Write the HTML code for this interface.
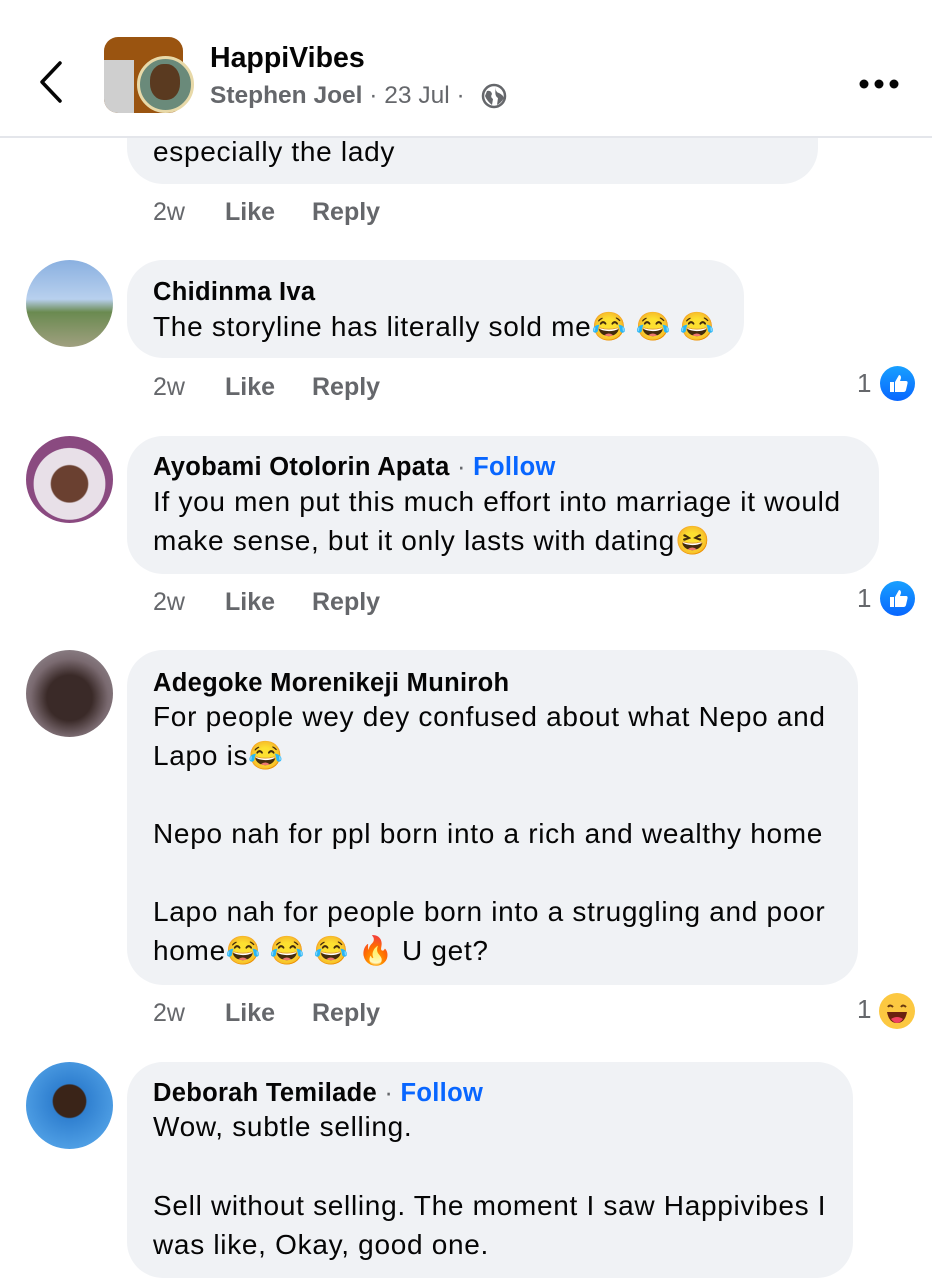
<!DOCTYPE html>
<html><head><meta charset="utf-8"><style>
*{margin:0;padding:0;box-sizing:border-box}
body{width:932px;height:1280px;overflow:hidden;background:#fff;font-family:"Liberation Sans",Arial,sans-serif;position:relative;color:#050505}
.a{position:absolute;white-space:nowrap}
.bub{position:absolute;background:#f0f2f5;border-radius:36px}
.av{position:absolute;left:26px;width:87px;height:87px;border-radius:50%;overflow:hidden}
.nm{font-weight:bold;font-size:25.5px;line-height:30px;letter-spacing:0.3px}
.tx{font-size:28px;line-height:39px;letter-spacing:0.7px}
.act{font-size:25px;color:#65676b;line-height:30px}
.act b{position:absolute}
.fol{color:#0866ff}
.cnt{font-size:26px;color:#65676b;line-height:30px}
.like{position:absolute;width:35px;height:35px;border-radius:50%;background:linear-gradient(#18a0ff,#0866ff)}
</style></head><body>

<div class="bub" style="left:127px;top:100px;width:691px;height:84px"></div>
<div class="a tx" style="left:153px;top:132px">especially the lady</div>

<div style="position:absolute;left:0;top:0;width:932px;height:138px;background:#fff;border-bottom:2px solid #e4e6eb"></div>
<svg class="a" style="left:36px;top:60px" width="30" height="44"><path d="M24 3 L6 22 L24 41" stroke="#050505" stroke-width="3.5" fill="none" stroke-linecap="round" stroke-linejoin="round"/></svg>
<div class="a" style="left:104px;top:37px;width:79px;height:76px;border-radius:14px;background:#9a5410"></div>
<div class="a" style="left:104px;top:60px;width:30px;height:53px;border-radius:0 0 0 14px;background:#cfcfcf"></div>
<div class="a" style="left:137px;top:56px;width:57px;height:57px;border-radius:50%;background:#6a8a7a;border:3px solid #e8d9a8"></div>
<div class="a" style="left:150px;top:64px;width:30px;height:36px;border-radius:45%;background:#5a3a20"></div>
<div class="a" style="left:210px;top:42px;font-size:28.5px;font-weight:bold;line-height:32px">HappiVibes</div>
<div class="a" style="left:210px;top:81px;font-size:24.5px;color:#65676b;line-height:30px"><b>Stephen Joel</b> · 23 Jul · </div>
<svg class="a" style="left:481px;top:83px" width="26" height="26" viewBox="0 0 26 26"><circle cx="13" cy="13" r="11" fill="none" stroke="#65676b" stroke-width="2.5"/><path d="M6 8 Q10 7 11 11 Q9 14 12 16 L11 22 Q6 18 4 13 Z M15 4 Q14 9 18 10 Q22 12 23 15 Q20 20 16 22 L17 15 Q13 13 15 4Z" fill="#65676b"/></svg>
<div class="a" style="left:859px;top:76px"><svg width="42" height="10"><circle cx="5" cy="5" r="4.5" fill="#050505"/><circle cx="20" cy="5" r="4.5" fill="#050505"/><circle cx="35" cy="5" r="4.5" fill="#050505"/></svg></div>

<div class="a act" style="left:153px;top:197px;width:400px"><span>2w</span><b style="left:72px">Like</b><b style="left:159px">Reply</b></div>

<div class="av" style="top:260px;background:linear-gradient(#8ab0e0 0,#b8d0ee 45%,#6a8a50 60%,#a0a080 100%)"></div>
<div class="bub" style="left:127px;top:260px;width:617px;height:98px"></div>
<div class="a nm" style="left:153px;top:277px">Chidinma Iva</div>
<div class="a tx" style="left:153px;top:307px">The storyline has literally sold me😂 😂 😂</div>
<div class="a act" style="left:153px;top:372px;width:400px"><span>2w</span><b style="left:72px">Like</b><b style="left:159px">Reply</b></div>
<div class="a cnt" style="left:857px;top:368px">1</div>
<div class="like" style="left:880px;top:366px"><svg width="35" height="35" viewBox="0 0 35 35"><path d="M10 16h4v10h-4zM15 16l4-7q2 0 2 3l-1 3h6q2 0 1.5 2.5l-1.5 6.5q-.5 2-2.5 2H15z" fill="#fff"/></svg></div>

<div class="av" style="top:436px;background:radial-gradient(circle at 50% 55%,#6a4030 0 28%,#e8e0e8 30% 55%,#8a4a80 56%)"></div>
<div class="bub" style="left:127px;top:436px;width:752px;height:138px"></div>
<div class="a nm" style="left:153px;top:452px">Ayobami Otolorin Apata <span style="color:#65676b;font-weight:normal">·</span> <span class="fol">Follow</span></div>
<div class="a tx" style="left:153px;top:482px">If you men put this much effort into marriage it would</div>
<div class="a tx" style="left:153px;top:521px">make sense, but it only lasts with dating😆</div>
<div class="a act" style="left:153px;top:587px;width:400px"><span>2w</span><b style="left:72px">Like</b><b style="left:159px">Reply</b></div>
<div class="a cnt" style="left:857px;top:583px">1</div>
<div class="like" style="left:880px;top:581px"><svg width="35" height="35" viewBox="0 0 35 35"><path d="M10 16h4v10h-4zM15 16l4-7q2 0 2 3l-1 3h6q2 0 1.5 2.5l-1.5 6.5q-.5 2-2.5 2H15z" fill="#fff"/></svg></div>

<div class="av" style="top:650px;background:radial-gradient(circle at 50% 55%,#3a2a28 0 35%,#7a6a70 60%,#a09aa0)"></div>
<div class="bub" style="left:127px;top:650px;width:731px;height:335px"></div>
<div class="a nm" style="left:153px;top:668px">Adegoke Morenikeji Muniroh</div>
<div class="a tx" style="left:153px;top:697px">For people wey dey confused about what Nepo and</div>
<div class="a tx" style="left:153px;top:736px">Lapo is😂</div>
<div class="a tx" style="left:153px;top:814px">Nepo nah for ppl born into a rich and wealthy home</div>
<div class="a tx" style="left:153px;top:892px">Lapo nah for people born into a struggling and poor</div>
<div class="a tx" style="left:153px;top:931px">home😂 😂 😂 🔥 U get?</div>
<div class="a act" style="left:153px;top:998px;width:400px"><span>2w</span><b style="left:72px">Like</b><b style="left:159px">Reply</b></div>
<div class="a cnt" style="left:857px;top:994px">1</div>
<div class="a" style="left:879px;top:993px;width:36px;height:36px;border-radius:50%;background:#fcc841;font-size:0"><svg width="36" height="36" viewBox="0 0 36 36"><path d="M9 14q2-3 5 0M22 14q2-3 5 0" stroke="#6a3a10" stroke-width="2" fill="none"/><path d="M8 19h20q-2 11-10 11T8 19z" fill="#6a2010"/><path d="M12 26q6-4 12 0q-3 4-6 4t-6-4z" fill="#f04060"/></svg></div>

<div class="av" style="top:1062px;background:radial-gradient(circle at 50% 45%,#3a2418 0 25%,#3080d0 27%,#60b0f0)"></div>
<div class="bub" style="left:127px;top:1062px;width:726px;height:216px"></div>
<div class="a nm" style="left:153px;top:1078px">Deborah Temilade <span style="color:#65676b;font-weight:normal">·</span> <span class="fol">Follow</span></div>
<div class="a tx" style="left:153px;top:1107px">Wow, subtle selling.</div>
<div class="a tx" style="left:153px;top:1186px">Sell without selling. The moment I saw Happivibes I</div>
<div class="a tx" style="left:153px;top:1225px">was like, Okay, good one.</div>
</body></html>
